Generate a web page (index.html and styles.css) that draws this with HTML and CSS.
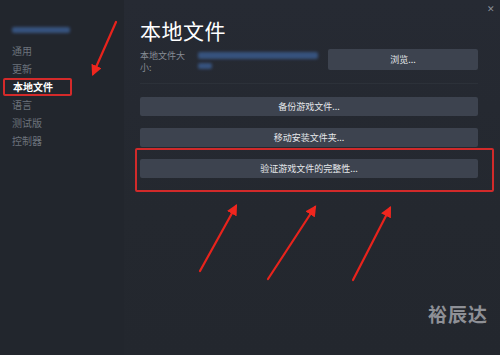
FILE: index.html
```html
<!DOCTYPE html>
<html lang="zh">
<head>
<meta charset="utf-8">
<link rel="stylesheet" href="styles.css">
</head>
<body>
<div class="app">
  <aside class="sidebar">
    <div class="game-name"><span class="blur blur-a"></span></div>
    <ul class="nav">
      <li>通用</li>
      <li>更新</li>
      <li class="active">本地文件</li>
      <li>语言</li>
      <li>测试版</li>
      <li>控制器</li>
    </ul>
  </aside>
  <main class="main">
    <div class="close">✕</div>
    <h1 class="title">本地文件</h1>
    <div class="size-row">
      <div class="size-label">本地文件大<br>小:</div>
      <div class="size-value">
        <span class="blur blur-b"></span>
        <span class="blur blur-c"></span>
      </div>
      <button class="btn btn-browse">浏览...</button>
    </div>
    <div class="sep"></div>
    <div class="actions">
      <button class="btn">备份游戏文件...</button>
      <button class="btn">移动安装文件夹...</button>
      <div class="highlight">
        <button class="btn">验证游戏文件的完整性...</button>
      </div>
    </div>
  </main>
  <svg class="arrows" width="500" height="355" viewBox="0 0 500 355">
    <defs>
      <marker id="head" viewBox="0 0 10 10" refX="8" refY="5" markerWidth="5" markerHeight="5" orient="auto">
        <path d="M0 0 L10 5 L0 10 z" fill="#f0261e"/>
      </marker>
    </defs>
    <g stroke="#e8231c" stroke-width="2.2" stroke-linecap="round" fill="none">
      <path d="M116 22 L93 74" marker-end="url(#head)"/>
      <path d="M200 271 L236 206" marker-end="url(#head)"/>
      <path d="M268 279 L315 207" marker-end="url(#head)"/>
      <path d="M353 280 L390 208" marker-end="url(#head)"/>
    </g>
  </svg>
  <div class="watermark">裕辰达</div>
</div>
</body>
</html>
```

FILE: styles.css
```css
* { box-sizing: border-box; }
html, body { margin: 0; padding: 0; }
body {
  width: 500px;
  height: 355px;
  overflow: hidden;
  background: #24282f;
  font-family: "Noto Sans CJK SC", "Noto Sans", sans-serif;
}
.app {
  position: relative;
  display: flex;
  width: 500px;
  height: 355px;
}
.sidebar {
  width: 124px;
  flex: none;
  background: #22262d;
  padding: 27px 0 0 0;
}
.game-name { height: 6px; padding-left: 12px; display: flex; }
.blur {
  display: inline-block;
  background: #3a5a8c;
  filter: blur(1.5px);
  opacity: 0.85;
  border-radius: 2px;
}
.blur-a { width: 58px; height: 6px; }
.nav {
  list-style: none;
  margin: 9px 0 0 0;
  padding: 0;
}
.nav li {
  font-size: 10px;
  line-height: 18px;
  height: 18px;
  color: #6c737c;
  padding-left: 12px;
}
.nav li.active {
  color: #ffffff;
  font-weight: bold;
  margin-left: 3px;
  margin-right: 52px;
  padding-left: 8px;
  border: 2px solid #d42a2a;
  border-radius: 2px;
  line-height: 14px;
}
.main {
  position: relative;
  flex: 1;
  background: linear-gradient(180deg, #262a33 0%, #24282f 60%, #23272e 100%);
  padding: 16px 22px 0 16px;
}
.close {
  position: absolute;
  top: 2px;
  right: 5px;
  font-size: 9px;
  color: #8b9099;
}
.title {
  margin: 0;
  font-size: 21px;
  font-weight: normal;
  color: #ffffff;
  line-height: 28px;
  letter-spacing: 0.5px;
}
.size-row {
  display: flex;
  align-items: flex-start;
  margin-top: 5px;
}
.size-label {
  width: 58px;
  font-size: 9px;
  line-height: 12px;
  color: #868c95;
  padding-top: 1px;
}
.size-value {
  width: 130px;
  display: flex;
  flex-direction: column;
  gap: 4px;
  padding-top: 3px;
}
.blur-b { width: 120px; height: 7px; }
.blur-c { width: 14px; height: 6px; }
.btn {
  display: block;
  border: none;
  background: #3d434f;
  color: #e6e8eb;
  font-family: inherit;
  font-size: 9px;
  height: 19px;
  width: 338px;
  padding: 0;
  border-radius: 2px;
}
.btn-browse {
  width: 150px;
  height: 21px;
}
.sep {
  height: 1px;
  background: #2c3139;
  margin-top: 9px;
}
.actions {
  display: flex;
  flex-direction: column;
  gap: 12px;
  margin-top: 13px;
}
.highlight {
  margin: -11px -16px 0 -5px;
  border: 2px solid #d12a2a;
  border-radius: 2px;
  padding: 9px 14px 12px 3px;
}
.arrows {
  position: absolute;
  left: 0;
  top: 0;
  pointer-events: none;
}
.watermark {
  position: absolute;
  left: 428px;
  top: 300px;
  font-size: 19px;
  font-weight: bold;
  color: #8e9096;
  letter-spacing: 1px;
}
```
